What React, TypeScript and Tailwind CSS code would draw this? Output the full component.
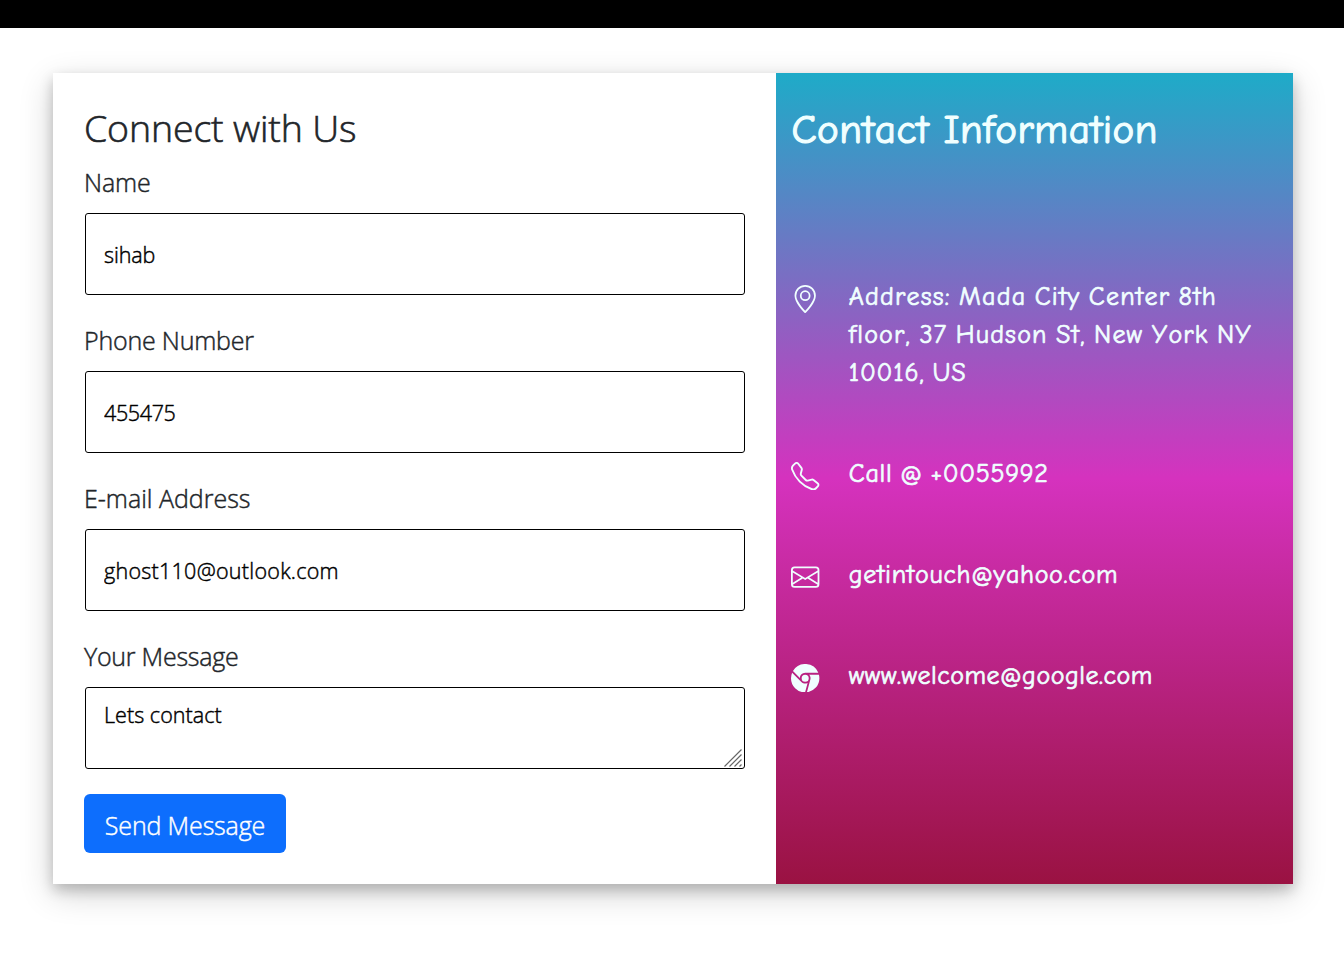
import type { ReactNode } from 'react';
import { BsBrowserChrome, BsEnvelope, BsGeoAlt, BsTelephone } from 'react-icons/bs';

function Field({ label, spacing, children }: { label: string; spacing: string; children: ReactNode }) {
  return (
    <div className="flex h-[158px] flex-col">
      <label className={`-mt-[2px] flex h-[49px] shrink-0 items-start text-[25px] leading-[37px] text-[#212529] ${spacing}`}>
        <span className="whitespace-nowrap">{label}</span>
      </label>
      {children}
    </div>
  );
}

const inputClass =
  'ml-px block h-[82px] w-[660px] shrink-0 rounded-[3px] border border-black bg-white px-[18px] text-[21.5px] text-black outline-none [-webkit-text-stroke:0.45px_#000]';

function Info({ icon, children, className }: { icon: ReactNode; children: ReactNode; className: string }) {
  return (
    <div className={`flex items-start ${className}`}>
      <div className="mt-[7px] w-[57.4px] shrink-0 text-[28.4px]">{icon}</div>
      <div className="text-[26px] font-medium leading-[38px] whitespace-nowrap [-webkit-text-stroke:0.7px_#f0ffff] [font-kerning:none] [font-variant-ligatures:none] [word-spacing:-1.5px]">
        {children}
      </div>
    </div>
  );
}

export default function App() {
  return (
    <div className="h-[953px] w-[1344px] overflow-hidden bg-white font-['Segoe_UI','Open_Sans',sans-serif] font-light">
      <div className="h-7 bg-black" />
      <main className="mt-[45px] ml-[53px] flex h-[811px] w-[1240px] shadow-[0_6.3px_12.6px_rgba(0,0,0,0.2),0_9.5px_31.5px_rgba(0,0,0,0.19)]">
        <form className="w-[723px] bg-white pt-[31px] pl-[31px] [-webkit-text-stroke:0.45px_#212529]">
          <h2 className="h-[62px] text-[37.5px] leading-[47px] tracking-[-0.15px] text-[#212529] [-webkit-text-stroke:0.6px_#212529]">
            Connect with Us
          </h2>
          <Field label="Name" spacing="tracking-[-0.1px]">
            <input className={`${inputClass} tracking-[-0.1px]`} defaultValue="sihab" />
          </Field>
          <Field label="Phone Number" spacing="tracking-[-0.2px]">
            <input className={`${inputClass} tracking-[-0.35px]`} defaultValue="455475" />
          </Field>
          <Field label="E-mail Address" spacing="tracking-[0px]">
            <input className={`${inputClass} tracking-[0.27px]`} defaultValue="ghost110@outlook.com" />
          </Field>
          <Field label="Your Message" spacing="tracking-[-0.25px]">
            <textarea className={`${inputClass} resize-none pt-[10px] leading-[34px] tracking-[0.05px]`} defaultValue="Lets contact" />
            <div className="relative">
              <svg className="absolute top-[-20px] left-[640px] h-[18px] w-[18px]" viewBox="0 0 18 18" fill="none" stroke="#666" strokeWidth="1.2">
                <path d="M0.5 17.5L17.5 0.5M5.5 17.5L17.5 5.5M10.5 17.5L17.5 10.5M15.5 17.5L17.5 15.5" />
              </svg>
            </div>
          </Field>
          <button
            type="button"
            className="-mt-[4px] flex h-[59px] w-[202px] items-center justify-center rounded-[6px] bg-[#0d6efd] pt-[4px] text-[25px] tracking-[-0.15px] whitespace-nowrap text-white [-webkit-text-stroke:0.45px_#fff]"
          >
            Send Message
          </button>
        </form>
        <aside className="w-[517px] bg-[linear-gradient(rgb(30,171,200),rgb(213,50,190)_50%,rgb(154,18,66))] pt-[33px] pl-[15.4px] font-['Comic_Sans_MS','Comic_Neue',Lato,sans-serif] text-[#f0ffff]">
          <h2 className="h-[172px] text-[41px] leading-[47px] font-medium tracking-[0.55px] whitespace-nowrap [-webkit-text-stroke:1.2px_#f0ffff] [font-kerning:none] [font-variant-ligatures:none]">
            Contact Information
          </h2>
          <Info icon={<BsGeoAlt />} className="h-[177px]">
            <div className="tracking-[1.2px]">Address: Mada City Center 8th</div>
            <div className="tracking-[1.2px]">floor, 37 Hudson St, New York NY</div>
            <div className="tracking-[0.85px]">10016, US</div>
          </Info>
          <Info icon={<BsTelephone />} className="h-[101px] tracking-[0.7px]">
            Call @ +0055992
          </Info>
          <Info icon={<BsEnvelope />} className="h-[101px] tracking-[0.7px]">
            getintouch@yahoo.com
          </Info>
          <Info icon={<BsBrowserChrome />} className="h-[101px] tracking-[0.5px]">
            www.welcome@google.com
          </Info>
        </aside>
      </main>
    </div>
  );
}
